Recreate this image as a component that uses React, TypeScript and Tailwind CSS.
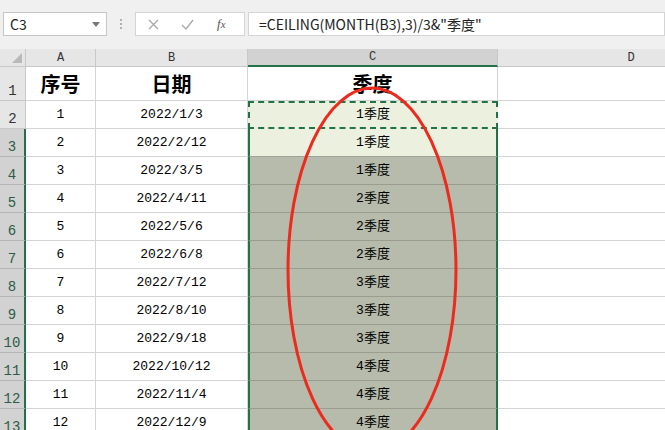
import React from 'react';

const ROWS: [number, string, string][] = [
  [1, '2022/1/3', '1季度'],
  [2, '2022/2/12', '1季度'],
  [3, '2022/3/5', '1季度'],
  [4, '2022/4/11', '2季度'],
  [5, '2022/5/6', '2季度'],
  [6, '2022/6/8', '2季度'],
  [7, '2022/7/12', '3季度'],
  [8, '2022/8/10', '3季度'],
  [9, '2022/9/18', '3季度'],
  [10, '2022/10/12', '4季度'],
  [11, '2022/11/4', '4季度'],
  [12, '2022/12/9', '4季度'],
];

function FormulaBar() {
  return (
    <div className="h-[49px] bg-[#f0f0f0] flex items-start pt-[12px] pl-[3px]">
      <div className="w-[104px] h-[24px] shrink-0 bg-white border border-[#c6c6c6] flex items-center justify-between pl-[6px] pr-[6px]">
        <span className="text-[14px] text-[#222]">C3</span>
        <svg width="8" height="5" viewBox="0 0 8 5">
          <path d="M0 0h8L4 5z" fill="#777" />
        </svg>
      </div>
      <div className="w-[28px] h-[24px] shrink-0 flex flex-col items-center justify-center gap-[2px]">
        <span className="w-[2px] h-[2px] bg-[#b0b0b0]" />
        <span className="w-[2px] h-[2px] bg-[#b0b0b0]" />
        <span className="w-[2px] h-[2px] bg-[#b0b0b0]" />
      </div>
      <div className="w-[110px] h-[24px] shrink-0 bg-white border border-[#d4d4d4] flex items-center pl-[12px]">
        <svg width="11" height="11" viewBox="0 0 11 11">
          <path d="M1 1l9 9M10 1l-9 9" stroke="#a8a8a8" strokeWidth="1.3" />
        </svg>
        <svg className="ml-[22px]" width="13" height="11" viewBox="0 0 13 11">
          <path d="M1 6l4 4 7-9" stroke="#a8a8a8" strokeWidth="1.3" fill="none" />
        </svg>
        <span className="ml-[23px] text-[13px] italic text-[#555] font-['Liberation_Serif',serif]">
          f<span className="text-[11px]">x</span>
        </span>
      </div>
      <div className="ml-[3px] flex-1 h-[24px] bg-white border border-[#d4d4d4] flex items-center pl-[10px]">
        <span className="text-[14px] text-[#222]">=CEILING(MONTH(B3),3)/3&amp;"季度"</span>
      </div>
    </div>
  );
}

export default function App() {
  const mono = "font-['Liberation_Mono','Noto_Sans_CJK_SC',monospace]";
  const head = 'shrink-0 border-r border-b border-[#c8c8c8] flex items-end justify-center pb-[2px] leading-none';
  const cell = 'shrink-0 border-r border-b border-[#d4d4d4] flex items-center justify-center';
  return (
    <div className="w-[665px] h-[430px] overflow-hidden relative bg-white font-['Noto_Sans_CJK_SC','Liberation_Sans',sans-serif]">
      <FormulaBar />

      {/* column headers */}
      <div className={`flex h-[18px] bg-[#e6e6e6] text-[12px] text-[#333] ${mono}`}>
        <div className="w-[26px] shrink-0 border-r border-b border-[#c8c8c8] relative">
          <svg className="absolute right-[3px] bottom-[3px]" width="10" height="10" viewBox="0 0 10 10">
            <path d="M10 0v10H0z" fill="#b9b9b9" />
          </svg>
        </div>
        <div className={`w-[70px] ${head}`}>A</div>
        <div className={`w-[152px] ${head}`}>B</div>
        <div className="w-[250px] shrink-0 bg-[#d2d2d2] border-r border-[#c8c8c8] border-b-2 border-b-[#217346] flex items-end justify-center pb-[2px] leading-none">C</div>
        <div className={`w-[267px] ${head}`}>D</div>
      </div>

      {/* row 1 */}
      <div className="flex h-[34px]">
        <div className={`w-[26px] shrink-0 bg-[#e6e6e6] border-r border-b border-[#c8c8c8] flex items-end justify-center pb-[2px] leading-none text-[14px] text-[#333] ${mono}`}>1</div>
        <div className={`w-[70px] ${cell} text-[20px] font-bold text-black`}>序号</div>
        <div className={`w-[152px] ${cell} text-[20px] font-bold text-black`}>日期</div>
        <div className={`w-[250px] ${cell} text-[20px] font-bold text-black`}>季度</div>
        <div className="w-[267px] shrink-0 border-b border-[#d4d4d4]" />
      </div>

      {ROWS.map(([n, d, q], i) => {
        const row = i + 2;
        const sel = row >= 3;
        return (
          <div key={row} className={`flex h-[28px] text-[13px] text-black ${mono}`}>
            <div
              className={`w-[26px] shrink-0 flex items-end justify-center pb-[2px] leading-none text-[14px] ${
                sel
                  ? 'bg-[#d2d2d2] border-r-2 border-r-[#217346] border-b border-b-[#b5b5b5] text-[#2b5d44]'
                  : 'bg-[#e6e6e6] border-r border-b border-[#c8c8c8] text-[#333]'
              }`}
            >
              {row}
            </div>
            <div className={`w-[70px] ${cell}`}>{n}</div>
            <div className={`w-[152px] ${cell}`}>{d}</div>
            {row === 2 && (
              <div className="w-[250px] shrink-0 bg-[#ebf0df] border-2 border-dashed border-[#217346] flex items-center justify-center">
                {q}
              </div>
            )}
            {row === 3 && (
              <div className="w-[250px] shrink-0 bg-[#ebf0df] border-x-2 border-[#217346] border-b border-b-[#9fa294] flex items-center justify-center">
                {q}
              </div>
            )}
            {row > 3 && (
              <div className="w-[250px] shrink-0 bg-[#b7bbab] border-x-2 border-[#217346] border-b border-b-[#9a9d8e] flex items-center justify-center">
                {q}
              </div>
            )}
            <div className="w-[267px] shrink-0 border-b border-[#d4d4d4]" />
          </div>
        );
      })}

      <svg className="absolute left-0 top-0 pointer-events-none" width="665" height="430" viewBox="0 0 665 430">
        <ellipse cx="372" cy="270" rx="84" ry="182" fill="none" stroke="#ec2a1e" strokeWidth="3" />
      </svg>
    </div>
  );
}
